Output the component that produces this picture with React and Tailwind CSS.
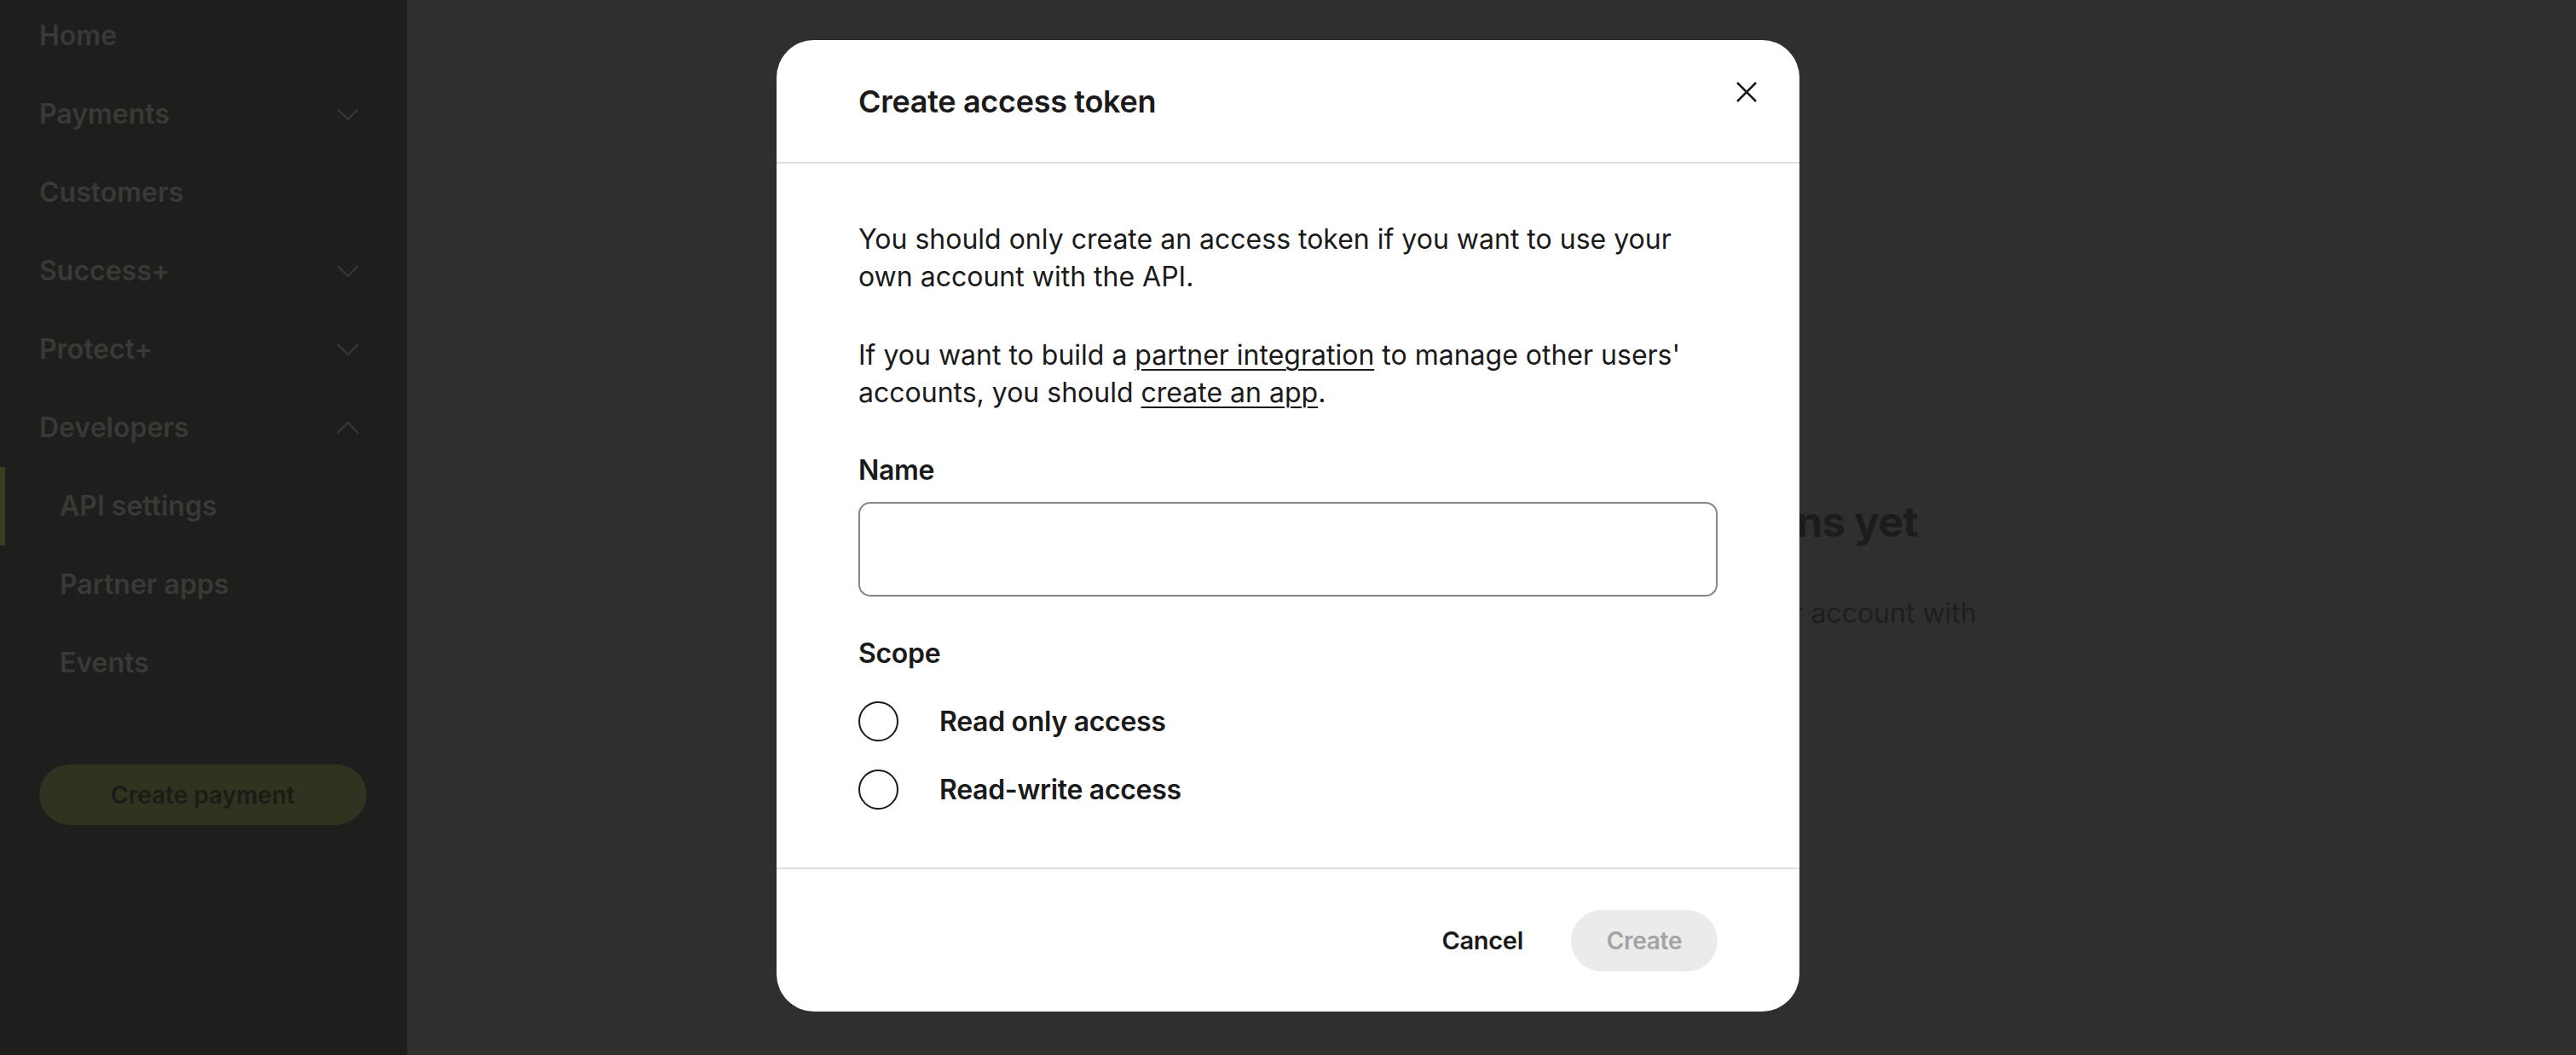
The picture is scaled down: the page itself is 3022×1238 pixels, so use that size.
import React from "react";

const font = { fontFamily: "Inter, 'Liberation Sans', sans-serif" };

function Chevron({ up }) {
  return (
    <svg width="26" height="14" viewBox="0 0 26 14" fill="none" stroke="#3a3936" strokeWidth="2">
      {up ? <path d="M1 13 L13 1 L25 13" /> : <path d="M1 1 L13 13 L25 1" />}
    </svg>
  );
}

function NavItem({ label, chevron, sub, active }) {
  return (
    <div className="relative h-[92px] flex items-center justify-between pr-[56px]">
      {active && <div className="absolute left-0 top-0 h-[92px] w-[6px] bg-[#3a3b22]" />}
      <span className={`${sub ? "pl-[70px]" : "pl-[46px]"} text-[32px] font-semibold text-[#3a3936]`}>{label}</span>
      {chevron && <Chevron up={chevron === "up"} />}
    </div>
  );
}

function Radio({ label }) {
  return (
    <label className="flex items-center gap-[48px] h-[47px]">
      <span className="w-[47px] h-[47px] rounded-full border-2 border-[#1a1a1a] shrink-0" />
      <span className="text-[32px] font-semibold text-[#1a1a1a] tracking-[-0.3px]">{label}</span>
    </label>
  );
}

export default function App() {
  return (
    <div className="relative w-[3022px] h-[1238px] overflow-hidden flex bg-[#302f2d]" style={font}>
      <aside className="w-[478px] h-full bg-[#1e1e1c] border-r border-[#262624] flex flex-col">
        <div className="-mt-[4px]">
          <NavItem label="Home" />
          <NavItem label="Payments" chevron="down" />
          <NavItem label="Customers" />
          <NavItem label="Success+" chevron="down" />
          <NavItem label="Protect+" chevron="down" />
          <NavItem label="Developers" chevron="up" />
          <NavItem label="API settings" sub active />
          <NavItem label="Partner apps" sub />
          <NavItem label="Events" sub />
        </div>
        <button className="mt-[73px] ml-[46px] w-[384px] h-[71px] rounded-full bg-[#31321f] text-[#1c1c17] text-[28px] font-semibold">
          Create payment
        </button>
      </aside>

      <main className="flex-1 flex flex-col items-center text-center pt-[582px]">
        <h2 className="text-[50px] font-bold text-[#1d1c1a] tracking-[-1px] leading-[60px]">
          You haven't created any access tokens yet
        </h2>
        <p className="mt-[56px] text-[32px] text-[#1f1e1c] leading-[44px]">
          Use an access token to connect your scripts and tools to your account with
          <br />
          the GoCardless API.
        </p>
      </main>

      <div className="absolute inset-0 flex items-center justify-center">
        <div className="mb-[4px] w-[1200px] h-[1140px] bg-white rounded-[44px] flex flex-col text-[#1a1a1a]">
          <div className="h-[145px] flex items-center justify-between pl-[96px] pr-[48px] border-b-2 border-[#e0dfdb]">
            <h1 className="text-[36px] font-semibold tracking-[-0.3px]">Create access token</h1>
            <button className="-mt-[22px] w-[28px] h-[28px] flex items-center justify-center">
              <svg width="26" height="26" viewBox="0 0 26 26" stroke="#1a1a1a" strokeWidth="2.5" fill="none">
                <path d="M2 2 L24 24 M24 2 L2 24" />
              </svg>
            </button>
          </div>

          <div className="flex-1 px-[96px] pt-[67px]">
            <p className="text-[32px] leading-[44px]">
              You should only create an access token if you want to use your own account with the API.
            </p>
            <p className="mt-[48px] text-[32px] leading-[44px]">
              If you want to build a <span className="underline decoration-2 underline-offset-[5px]">partner integration</span> to manage other users' accounts, you should <span className="underline decoration-2 underline-offset-[5px]">create an app</span>.
            </p>
            <div className="mt-[49px] text-[32px] font-semibold leading-[40px] tracking-[-0.3px]">Name</div>
            <div className="mt-[17px] h-[111px] rounded-[14px] border-2 border-[#8a867f]" />
            <div className="mt-[47px] text-[32px] font-semibold leading-[40px] tracking-[-0.3px]">Scope</div>
            <div className="mt-[36px] flex flex-col gap-[33px]">
              <Radio label="Read only access" />
              <Radio label="Read-write access" />
            </div>
          </div>

          <div className="h-[169px] border-t-2 border-[#e0dfdb] flex items-center justify-end gap-[56px] pr-[96px]">
            <button className="text-[29px] font-semibold tracking-[-0.3px]">Cancel</button>
            <button className="w-[172px] h-[72px] rounded-full bg-[#ebebeb] text-[#a3a3a3] text-[28px] font-semibold tracking-[-0.3px]">
              Create
            </button>
          </div>
        </div>
      </div>
    </div>
  );
}
